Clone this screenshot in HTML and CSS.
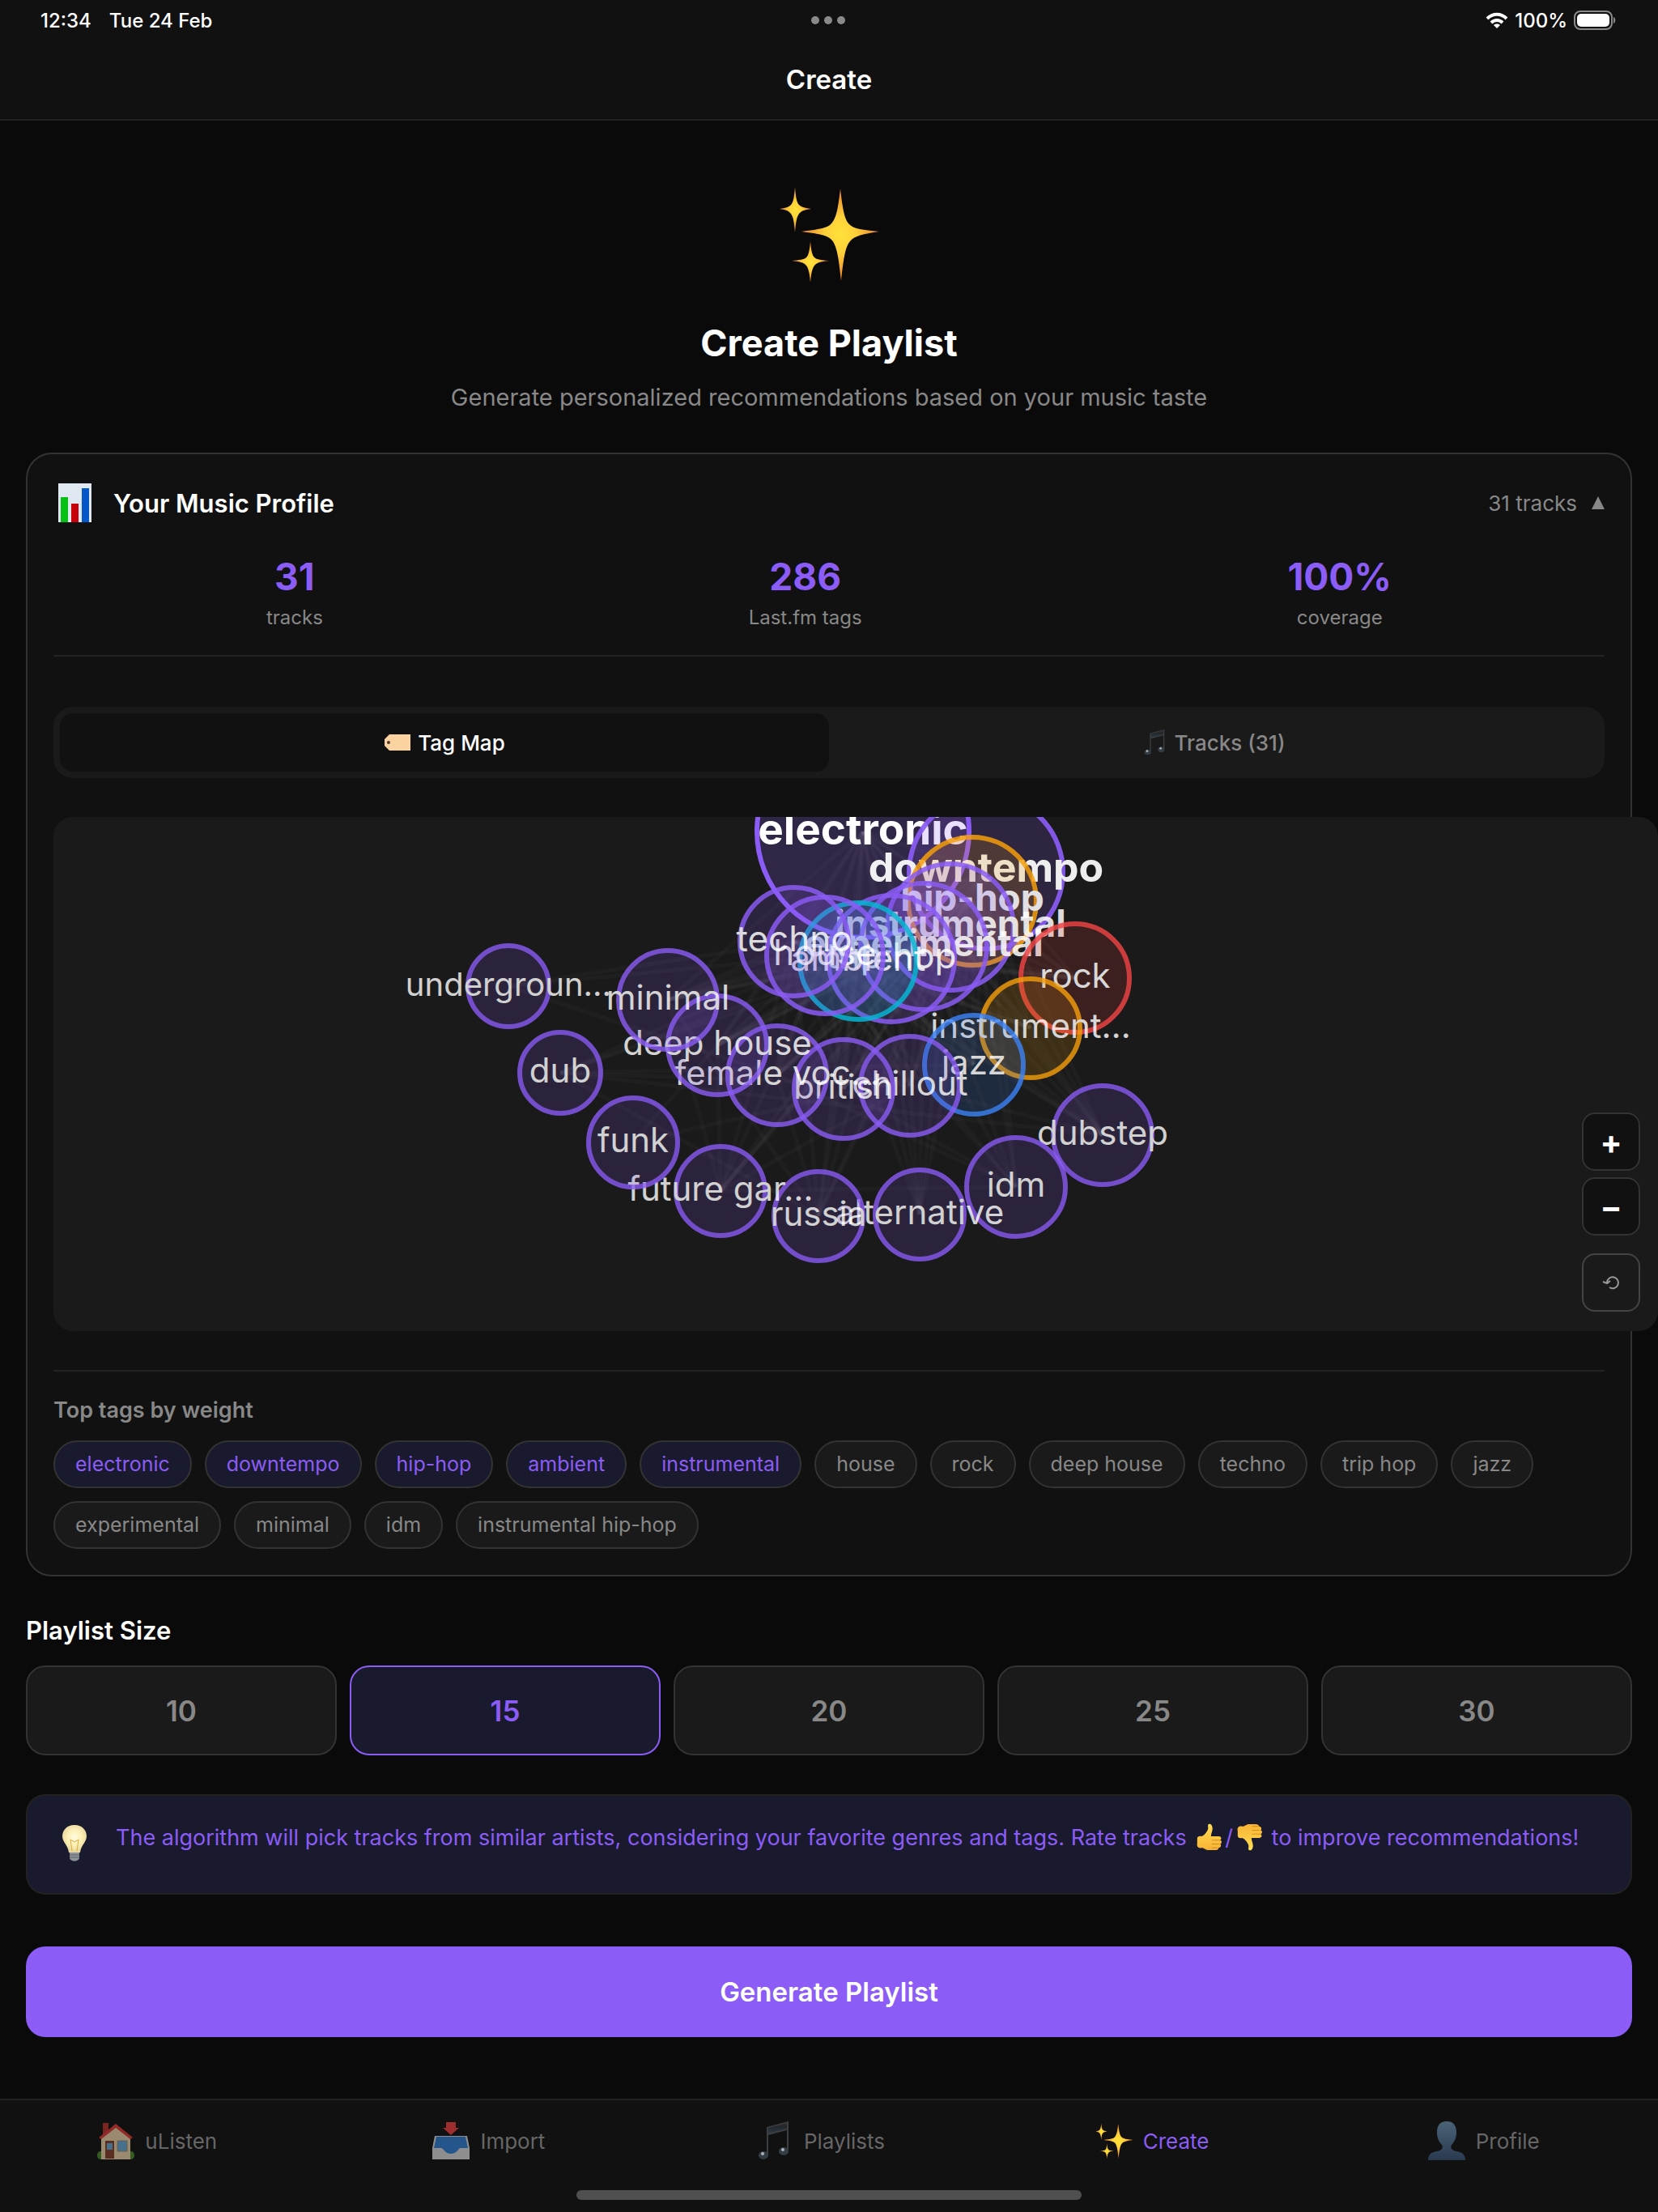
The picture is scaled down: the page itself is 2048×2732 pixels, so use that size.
FILE: index.html
```html
<!DOCTYPE html>
<html lang="en">
<head>
  <meta charset="utf-8">
  <title>Create Playlist</title>
  <link rel="stylesheet" href="styles.css">
</head>
<body>
  <!-- shared icons -->
  <svg class="defs" aria-hidden="true">
    <defs>
      <radialGradient id="gold">
        <stop offset="0" stop-color="#ffe23a"/>
        <stop offset="0.4" stop-color="#ffd03a"/>
        <stop offset="1" stop-color="#e8802c"/>
      </radialGradient>
      <linearGradient id="bust" x1="0" y1="0" x2="0" y2="1">
        <stop offset="0" stop-color="#4b6376"/>
        <stop offset="1" stop-color="#2a3a50"/>
      </linearGradient>
      <linearGradient id="skin" x1="0" y1="0" x2="0" y2="1">
        <stop offset="0" stop-color="#ffdf55"/>
        <stop offset="1" stop-color="#f9b233"/>
      </linearGradient>
      <linearGradient id="note" x1="0" y1="0" x2="0" y2="1">
        <stop offset="0" stop-color="#3a2828"/>
        <stop offset="0.35" stop-color="#23282d"/>
        <stop offset="1" stop-color="#2f3a42"/>
      </linearGradient>
      <radialGradient id="glow" cx="0.5" cy="0.45">
        <stop offset="0" stop-color="#fffbe0"/>
        <stop offset="0.6" stop-color="#fdf0b4"/>
        <stop offset="1" stop-color="#e8d9a0"/>
      </radialGradient>
      <symbol id="i-sparkles" viewBox="0 0 128 128">
        <path fill="url(#gold)" d="M78 8C81 34 83 46 89 52C95 58 106 59 126 61C106 64 96 66 90 73C84 80 82 94 79 122C76 94 74 80 68 72C62 65 52 64 30 61C52 58 62 57 67 51C73 44 75 34 78 8Z"/>
        <path fill="url(#gold)" d="M22 6C23 18 24 25 27 28C30 31 35 32 42 33C35 34 30 35 27 39C24 43 23 50 22 62C21 50 20 43 17 39C14 35 10 34 3 33C10 32 14 31 17 28C20 25 21 18 22 6Z"/>
        <path fill="url(#gold)" d="M41 73C42 84 43 90 46 93C49 96 55 96 64 97C55 98 49 99 46 103C43 107 42 113 41 124C40 113 39 107 36 103C33 99 27 98 18 97C27 96 33 96 36 93C39 90 40 84 41 73Z"/>
      </symbol>
      <symbol id="i-note" viewBox="0 0 48 48">
        <path fill="#3a3f44" d="M14 7L41 0V36H39V11L16 17V42H14Z"/>
        <path fill="url(#note)" d="M16 8L39 2V9L16 15Z"/>
        <ellipse cx="10" cy="42" rx="6" ry="5" fill="#343d44"/>
        <ellipse cx="35" cy="37" rx="6" ry="5" fill="#343d44"/>
        <circle cx="9" cy="40" r="2" fill="#a9b3bb"/>
        <circle cx="34" cy="35" r="2" fill="#a9b3bb"/>
      </symbol>
      <symbol id="i-thumb" viewBox="0 0 36 36">
        <path fill="url(#skin)" d="M3 20C3 17 6 16 9 17C13 15 15 12 17 8C18 5 16 2 18 1C21 0 23 3 23 7C23 11 21 13 21 17H31C35 17 35 21 33 22C36 23 35 27 33 27C35 28 34 32 31 32C31 34 29 35 26 35H18C14 35 12 32 9 32C4 33 2 30 3 26Z"/>
        <path fill="none" stroke="#d08a1c" d="M22 22H33M22 27H32M22 32H30"/>
      </symbol>
    </defs>
  </svg>

  <header class="header">
    <div class="status-bar">
      <div class="status-left"><span>12:34</span><span>Tue 24 Feb</span></div>
      <div class="status-dots"><i></i><i></i><i></i></div>
      <div class="status-right">
        <svg width="28" height="20" viewBox="0 0 28 20" fill="none" stroke="#fff" stroke-width="4">
          <path d="M2 8C9 1 19 1 26 8"/>
          <path d="M7 13C11 9 17 9 21 13"/>
          <path fill="#fff" stroke="none" d="M14 20L10 16C12 14 16 14 18 16Z"/>
        </svg>
        <span>100%</span>
        <svg width="52" height="24" viewBox="0 0 52 24">
          <rect x="1" y="1" width="46" height="22" rx="7" fill="none" stroke="#8a8a8a" stroke-width="2"/>
          <rect x="4" y="4" width="40" height="16" rx="5" fill="#fff"/>
          <path d="M49 8C52 9 52 15 49 16Z" fill="#8a8a8a"/>
        </svg>
      </div>
    </div>
    <div class="header-title">Create</div>
  </header>

  <main class="content">
    <section class="hero">
      <svg class="hero-icon" viewBox="0 0 128 128"><use href="#i-sparkles"/></svg>
      <h1>Create Playlist</h1>
      <p>Generate personalized recommendations based on your music taste</p>
    </section>

    <section class="card">
      <div class="card-header">
        <svg width="54" height="54" viewBox="0 0 54 54">
          <rect x="6" y="3" width="41" height="48" fill="#dfe7f0"/>
          <rect x="9" y="20" width="9" height="31" fill="#06c013"/>
          <rect x="22" y="28" width="9" height="23" fill="#c80009"/>
          <rect x="35" y="9" width="9" height="42" fill="#0457c9"/>
        </svg>
        <h2>Your Music Profile</h2>
        <span class="card-count">31 tracks</span>
        <svg width="16" height="16" viewBox="0 0 16 16"><path d="M8 0L16 16H0Z" fill="#888"/></svg>
      </div>

      <div class="stats">
        <div class="stat"><strong>31</strong><span>tracks</span></div>
        <div class="stat"><strong>286</strong><span>Last.fm tags</span></div>
        <div class="stat"><strong>100%</strong><span>coverage</span></div>
      </div>

      <div class="tabs">
        <button class="tab active" type="button">
          <svg width="34" height="22" viewBox="0 0 34 22"><path d="M7 1H33V21H7L1 15V7Z" fill="#fbd3a0"/><circle cx="6" cy="11" r="2" fill="#4a3a2a"/></svg>
          Tag Map
        </button>
        <button class="tab" type="button">
          <svg width="32" height="32" viewBox="0 0 48 48"><use href="#i-note"/></svg>
          Tracks (31)
        </button>
      </div>

      <div class="tag-map">
        <svg id="graph" viewBox="66 1009 1982 635"></svg>
        <div class="map-controls">
          <button type="button" aria-label="Zoom in">+</button>
          <button type="button" aria-label="Zoom out">−</button>
          <button type="button" class="reset" aria-label="Reset">
            <svg width="24" height="20" viewBox="0 0 24 20" fill="none" stroke="#999" stroke-width="2">
              <path d="M7 10A7 7 0 1 1 10 16M2 9L7 11L11 8"/>
            </svg>
          </button>
        </div>
      </div>

      <div class="top-tags">
        <h3>Top tags by weight</h3>
        <div class="chips">
          <span class="chip top">electronic</span>
          <span class="chip top">downtempo</span>
          <span class="chip top">hip-hop</span>
          <span class="chip top">ambient</span>
          <span class="chip top">instrumental</span>
          <span class="chip">house</span>
          <span class="chip">rock</span>
          <span class="chip">deep house</span>
          <span class="chip">techno</span>
          <span class="chip">trip hop</span>
          <span class="chip">jazz</span>
          <span class="chip">experimental</span>
          <span class="chip">minimal</span>
          <span class="chip">idm</span>
          <span class="chip">instrumental hip-hop</span>
        </div>
      </div>
    </section>

    <section class="sizes">
      <h2>Playlist Size</h2>
      <div class="size-row">
        <button class="size" type="button">10</button>
        <button class="size active" type="button">15</button>
        <button class="size" type="button">20</button>
        <button class="size" type="button">25</button>
        <button class="size" type="button">30</button>
      </div>
    </section>

    <div class="info">
      <svg class="bulb" viewBox="0 0 48 48">
        <path d="M24 2C14 2 9 9 9 16C9 23 16 27 17 36H31C32 27 39 23 39 16C39 9 34 2 24 2Z" fill="url(#glow)"/>
        <path d="M21 34L19 20L24 23L29 20L27 34" fill="none" stroke="#e0a93a" stroke-width="1"/>
        <path d="M18 36H30V42C30 48 18 48 18 42Z" fill="#8f9499"/>
        <path d="M18 39H30M18 42H30" stroke="#5c6166"/>
      </svg>
      <p>The algorithm will pick tracks from similar artists, considering your favorite genres and tags. Rate tracks <svg class="thumb" viewBox="0 0 36 36"><use href="#i-thumb"/></svg>/<svg class="thumb down" viewBox="0 0 36 36"><use href="#i-thumb"/></svg> to improve recommendations!</p>
    </div>

    <button class="generate" type="button">Generate Playlist</button>
  </main>

  <nav class="tab-bar">
    <div class="tab-items">
      <a href="#">
        <svg width="48" height="48" viewBox="0 0 48 48">
          <ellipse cx="5" cy="42" rx="4" ry="5" fill="#355c20"/>
          <ellipse cx="43" cy="42" rx="4" ry="5" fill="#355c20"/>
          <path d="M8 2H15V12L8 18Z" fill="#7a2723"/>
          <path d="M6 19L24 5L42 19V47H6Z" fill="#9a8a70"/>
          <path d="M24 3L3 20L6 22L24 8L42 22L45 20Z" fill="#922a26"/>
          <rect x="11" y="24" width="11" height="22" fill="#5a2f22"/>
          <rect x="13" y="27" width="7" height="8" fill="#46708c"/>
          <rect x="26" y="24" width="12" height="13" fill="#46708c" stroke="#6d5f4c"/>
        </svg>
        uListen
      </a>
      <a href="#">
        <svg width="48" height="48" viewBox="0 0 48 48">
          <path d="M4 18H44L47 33V47H1V33Z" fill="#8e8e8e"/>
          <path d="M6 19H42L45 33H36C33 33 32 40 24 40C16 40 15 33 12 33H3Z" fill="#24568c"/>
          <path d="M18 1H30V8H34L24 17L14 8H18Z" fill="#9c2f2e"/>
        </svg>
        Import
      </a>
      <a href="#">
        <svg width="48" height="48" viewBox="0 0 48 48"><use href="#i-note"/></svg>
        Playlists
      </a>
      <a href="#" class="active">
        <svg width="48" height="48" viewBox="0 0 128 128"><use href="#i-sparkles"/></svg>
        Create
      </a>
      <a href="#">
        <svg width="48" height="48" viewBox="0 0 48 48"><path d="M24 0C15 0 12 6 12 14C12 21 15 26 18 29C20 33 18 36 12 37C5 38 1 41 1 48H47C47 41 43 38 36 37C30 36 28 33 30 29C33 26 36 21 36 14C36 6 33 0 24 0Z" fill="url(#bust)"/></svg>
        Profile
      </a>
    </div>
    <div class="home-indicator"></div>
  </nav>

  <script>
    const purple = '#8b5cf6';

    // name, x, y, radius, font size, opacity, colour
    const nodes = [
      ['electronic', 1066, 1027, 131, 53, 1, purple],
      ['downtempo', 1218, 1077, 95, 50, 0.93, purple],
      ['hip-hop', 1201, 1113, 79, 46, 0.86, '#f59e0b'],
      ['instrumental', 1174, 1145, 78, 46, 0.85, purple],
      ['experimental', 1141, 1169, 78, 46, 0.85, purple],
      ['trip hop', 1101, 1184, 78, 44, 0.85, purple],
      ['ambient', 1060, 1187, 72, 44, 0.85, '#06b6d4'],
      ['house', 1019, 1180, 72, 44, 0.85, purple],
      ['techno', 981, 1163, 67, 44, 0.84, purple],
      ['rock', 1328, 1208, 67, 42, 0.83, '#ef4444'],
      ['instrument…', 1273, 1270, 61, 42, 0.82, '#f59e0b'],
      ['jazz', 1203, 1315, 61, 42, 0.82, '#3b82f6'],
      ['chillout', 1124, 1341, 61, 42, 0.81, purple],
      ['british', 1042, 1345, 61, 42, 0.81, purple],
      ['female voc…', 960, 1328, 61, 42, 0.81, purple],
      ['deep house', 886, 1291, 61, 42, 0.81, purple],
      ['minimal', 825, 1235, 61, 42, 0.81, purple],
      ['dubstep', 1362, 1402, 61, 42, 0.8, purple],
      ['idm', 1255, 1466, 61, 42, 0.8, purple],
      ['alternative', 1136, 1500, 55, 42, 0.8, purple],
      ['russia', 1011, 1502, 55, 42, 0.8, purple],
      ['future gar…', 890, 1471, 55, 42, 0.8, purple],
      ['funk', 782, 1411, 55, 42, 0.8, purple],
      ['dub', 692, 1325, 50, 42, 0.8, purple],
      ['undergroun…', 628, 1218, 50, 40, 0.8, purple]
    ];

    // Links between the outer tags
    const extraLinks = [[23, 11], [23, 12], [23, 17], [23, 20], [24, 14], [22, 11], [22, 15], [21, 16], [21, 15], [21, 12], [20, 14], [19, 12], [18, 13], [18, 14], [17, 12], [17, 10], [18, 21], [16, 20], [24, 7], [24, 8], [23, 3], [23, 5], [23, 7]];

    const graph = document.getElementById('graph');

    function draw(parent, name, attrs) {
      const el = document.createElementNS('http://www.w3.org/2000/svg', name);
      for (const key in attrs) {
        el.setAttribute(key, attrs[key]);
      }
      parent.appendChild(el);
      return el;
    }

    function link(a, b) {
      draw(graph, 'line', { x1: a[1], y1: a[2], x2: b[1], y2: b[2], class: 'link' });
    }

    // The inner ring is linked to nearly everything
    for (let i = 0; i < 9; i++) {
      for (let j = i + 1; j < 22; j++) {
        if (j < 18 || (i + j) % 3 !== 0) {
          link(nodes[i], nodes[j]);
        }
      }
    }
    extraLinks.forEach(([a, b]) => link(nodes[a], nodes[b]));

    nodes.forEach(([label, x, y, r, size, opacity, color]) => {
      const g = draw(graph, 'g', { opacity: opacity });
      draw(g, 'circle', { cx: x, cy: y, r: r, fill: color, 'fill-opacity': 0.2, stroke: color, 'stroke-width': 6 });
      const text = draw(g, 'text', { x: x, y: y + (size > 50 ? 16 : 12), 'font-size': size, class: size > 44 ? 'label bold' : 'label' });
      text.textContent = label;
    });
  </script>
</body>
</html>
```
FILE: styles.css
```css
* {
  box-sizing: border-box;
}

body {
  margin: 0;
  min-height: 100vh;
  display: flex;
  flex-direction: column;
  background-color: #0a0a0a;
  color: #fff;
  font-family: Inter, "Liberation Sans", sans-serif;
  overflow: hidden;
}

h1, h2, h3, p {
  margin: 0;
}

button {
  font-family: inherit;
  cursor: pointer;
}

.defs {
  position: absolute;
  width: 0;
  height: 0;
}

.header {
  background-color: #111;
  border-bottom: 2px solid #222;
}

.status-bar {
  display: grid;
  grid-template-columns: 1fr auto 1fr;
  align-items: center;
  height: 50px;
  padding: 0 52px 0 50px;
  font-size: 24px;
  font-weight: 500;
}

.status-left {
  display: flex;
  gap: 22px;
}

.status-dots {
  display: flex;
  gap: 6px;
}

.status-dots i {
  width: 10px;
  height: 10px;
  border-radius: 50%;
  background-color: #8a8a8a;
}

.status-right {
  display: flex;
  justify-content: flex-end;
  align-items: center;
  gap: 8px;
}

.header-title {
  height: 97px;
  line-height: 97px;
  text-align: center;
  font-size: 33px;
  font-weight: 600;
}

.content {
  flex: 1;
  display: flex;
  flex-direction: column;
  padding: 76px 32px 0;
}

.hero {
  display: flex;
  flex-direction: column;
  align-items: center;
  margin-bottom: 50px;
}

.hero-icon {
  width: 128px;
  height: 128px;
  margin-bottom: 42px;
}

.hero h1 {
  font-size: 45px;
  line-height: 58px;
  font-weight: 700;
  margin-bottom: 20px;
}

.hero p {
  font-size: 29px;
  line-height: 36px;
  color: #888;
}

.card {
  padding: 32px;
  background-color: #111;
  border: 2px solid #333;
  border-radius: 32px;
}

.card-header {
  display: flex;
  align-items: center;
  height: 56px;
}

.card-header h2 {
  flex: 1;
  margin-left: 20px;
  font-size: 31px;
  font-weight: 600;
}

.card-count {
  margin-right: 18px;
  font-size: 26px;
  color: #888;
}

.stats {
  display: flex;
  justify-content: space-around;
  padding: 34px 0 32px;
  border-bottom: 2px solid #222;
}

.stat {
  display: flex;
  flex-direction: column;
  align-items: center;
  gap: 8px;
}

.stat strong {
  font-size: 46px;
  line-height: 58px;
  color: #8b5cf6;
}

.stat span {
  font-size: 24px;
  line-height: 28px;
  color: #888;
}

.tabs {
  display: flex;
  margin: 62px 0 48px;
  padding: 8px;
  background-color: #1a1a1a;
  border-radius: 24px;
}

.tab {
  flex: 1;
  display: flex;
  justify-content: center;
  align-items: center;
  gap: 8px;
  height: 72px;
  border: none;
  border-radius: 16px;
  background: none;
  color: #888;
  font-size: 26px;
  font-weight: 500;
}

.tab.active {
  background-color: #111;
  color: #fff;
}

/* runs past the card to the edge of the screen */
.tag-map {
  position: relative;
  margin-right: -66px;
  background-color: #1a1a1a;
  border-radius: 24px;
  overflow: hidden;
}

.tag-map > svg {
  display: block;
  width: 100%;
}

.link {
  stroke: #fff;
  stroke-width: 5;
  opacity: 0.02;
}

.label {
  fill: #fff;
  text-anchor: middle;
}

.label.bold {
  font-weight: 700;
}

.map-controls {
  position: absolute;
  right: 22px;
  bottom: 24px;
  display: flex;
  flex-direction: column;
  gap: 8px;
}

.map-controls button {
  display: flex;
  justify-content: center;
  align-items: center;
  width: 72px;
  height: 72px;
  padding: 0;
  background-color: #111;
  border: 2px solid #333;
  border-radius: 16px;
  color: #fff;
  font-size: 40px;
  font-weight: 700;
}

.map-controls .reset {
  margin-top: 14px;
  background-color: #1a1a1a;
  border-color: #444;
}

.top-tags {
  margin-top: 48px;
  padding-top: 32px;
  border-top: 2px solid #222;
}

.top-tags h3 {
  margin-bottom: 21px;
  font-size: 27px;
  line-height: 32px;
  font-weight: 600;
  color: #888;
}

.chips {
  display: flex;
  flex-wrap: wrap;
  gap: 16px;
}

.chip {
  padding: 12px 25px;
  border: 2px solid #333;
  border-radius: 30px;
  background-color: #1a1a1a;
  color: #888;
  font-size: 25px;
  line-height: 31px;
}

.chip.top {
  background-color: #1a1a2e;
  color: #8b5cf6;
}

.sizes {
  margin: 48px 0;
}

.sizes h2 {
  margin-bottom: 24px;
  font-size: 31px;
  line-height: 38px;
  font-weight: 600;
}

.size-row {
  display: flex;
  gap: 16px;
}

.size {
  flex: 1;
  height: 111px;
  border: 2px solid #333;
  border-radius: 24px;
  background-color: #1a1a1a;
  color: #888;
  font-size: 35px;
  font-weight: 600;
}

.size.active {
  background-color: #1a1a2e;
  border-color: #8b5cf6;
  color: #8b5cf6;
}

.info {
  display: flex;
  gap: 27px;
  min-height: 124px;
  padding: 32px 34px;
  background-color: #1a1a2e;
  border: 2px solid #222;
  border-radius: 24px;
}

.bulb {
  width: 48px;
  height: 48px;
  margin-top: 2px;
}

.info p {
  font-size: 27px;
  line-height: 40px;
  color: #8b5cf6;
}

.thumb {
  width: 34px;
  height: 34px;
  margin: 0 3px;
  vertical-align: -7px;
}

.thumb.down {
  transform: rotate(180deg) scaleX(-1);
}

.generate {
  height: 112px;
  margin-top: 64px;
  border: none;
  border-radius: 24px;
  background-color: #8b5cf6;
  color: #fff;
  font-size: 33px;
  font-weight: 600;
}

.tab-bar {
  height: 140px;
  background-color: #111;
  border-top: 2px solid #222;
}

.tab-items {
  display: flex;
  height: 100px;
}

.tab-items a {
  flex: 1;
  display: flex;
  justify-content: center;
  align-items: center;
  gap: 12px;
  padding-right: 22px;
  color: #666;
  font-size: 26px;
  text-decoration: none;
}

.tab-items a.active {
  color: #8b5cf6;
}

.home-indicator {
  width: 624px;
  height: 12px;
  margin: 11px auto 0;
  border-radius: 6px;
  background-color: #505050;
}
```
